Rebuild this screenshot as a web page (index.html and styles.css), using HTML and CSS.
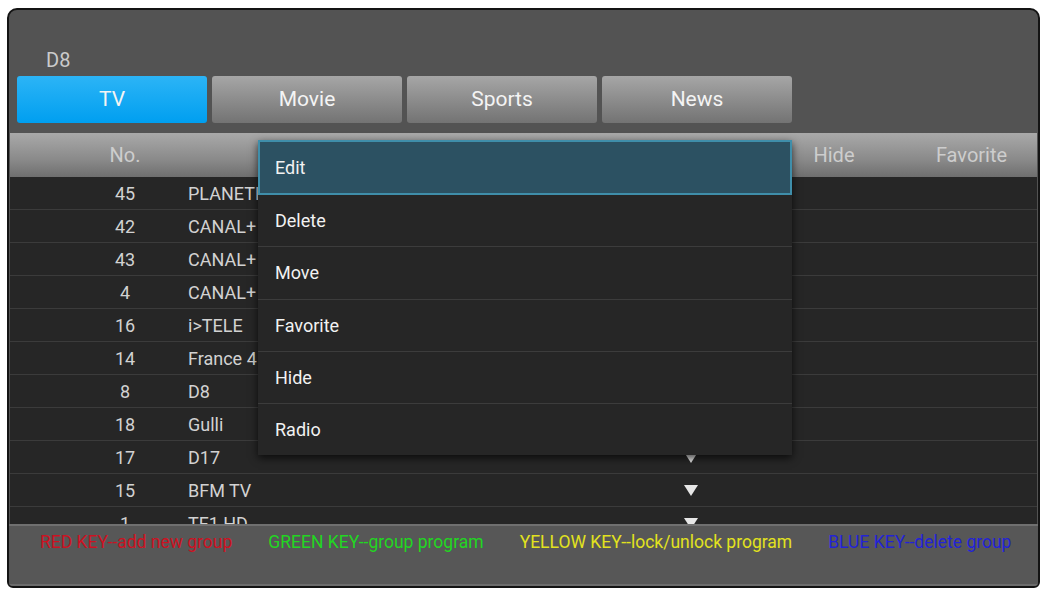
FILE: index.html
```html
<!DOCTYPE html>
<html lang="en">
<head>
    <meta charset="UTF-8">
    <title>Channel Edit</title>
    <link rel="stylesheet" href="styles.css">
</head>
<body>

<div class="panel">
    <!-- Current channel + groups -->
    <div class="top">
        <div class="current">D8</div>
        <div class="tabs">
            <div class="tab active">TV</div>
            <div class="tab">Movie</div>
            <div class="tab">Sports</div>
            <div class="tab">News</div>
        </div>
    </div>

    <!-- Channel table -->
    <div class="table">
        <div class="row head">
            <span class="no">No.</span>
            <span class="name center">Program Name</span>
            <span class="lock">Lock</span>
            <span class="hide">Hide</span>
            <span class="fav">Favorite</span>
        </div>
        <div class="list">
            <div class="row"><span class="no">45</span><span class="name">PLANETE+</span><span class="lock"><svg class="tri" viewBox="0 0 14 11"><polygon points="0,0 14,0 7,11"/></svg></span><span class="hide"></span><span class="fav"></span></div>
            <div class="row"><span class="no">42</span><span class="name">CANAL+ SPORT</span><span class="lock"><svg class="tri" viewBox="0 0 14 11"><polygon points="0,0 14,0 7,11"/></svg></span><span class="hide"></span><span class="fav"></span></div>
            <div class="row"><span class="no">43</span><span class="name">CANAL+ CINEMA</span><span class="lock"><svg class="tri" viewBox="0 0 14 11"><polygon points="0,0 14,0 7,11"/></svg></span><span class="hide"></span><span class="fav"></span></div>
            <div class="row"><span class="no">4</span><span class="name">CANAL+</span><span class="lock"><svg class="tri" viewBox="0 0 14 11"><polygon points="0,0 14,0 7,11"/></svg></span><span class="hide"></span><span class="fav"></span></div>
            <div class="row"><span class="no">16</span><span class="name">i&gt;TELE</span><span class="lock"><svg class="tri" viewBox="0 0 14 11"><polygon points="0,0 14,0 7,11"/></svg></span><span class="hide"></span><span class="fav"></span></div>
            <div class="row"><span class="no">14</span><span class="name">France 4</span><span class="lock"><svg class="tri" viewBox="0 0 14 11"><polygon points="0,0 14,0 7,11"/></svg></span><span class="hide"></span><span class="fav"></span></div>
            <div class="row"><span class="no">8</span><span class="name">D8</span><span class="lock"><svg class="tri" viewBox="0 0 14 11"><polygon points="0,0 14,0 7,11"/></svg></span><span class="hide"></span><span class="fav"></span></div>
            <div class="row"><span class="no">18</span><span class="name">Gulli</span><span class="lock"><svg class="tri" viewBox="0 0 14 11"><polygon points="0,0 14,0 7,11"/></svg></span><span class="hide"></span><span class="fav"></span></div>
            <div class="row"><span class="no">17</span><span class="name">D17</span><span class="lock"><svg class="tri" viewBox="0 0 14 11"><polygon points="0,0 14,0 7,11"/></svg></span><span class="hide"></span><span class="fav"></span></div>
            <div class="row"><span class="no">15</span><span class="name">BFM TV</span><span class="lock"><svg class="tri" viewBox="0 0 14 11"><polygon points="0,0 14,0 7,11"/></svg></span><span class="hide"></span><span class="fav"></span></div>
            <div class="row"><span class="no">1</span><span class="name">TF1 HD</span><span class="lock"><svg class="tri" viewBox="0 0 14 11"><polygon points="0,0 14,0 7,11"/></svg></span><span class="hide"></span><span class="fav"></span></div>
        </div>
    </div>

    <!-- Colour key hints -->
    <div class="keys">
        <span class="key red">RED KEY--add new group</span>
        <span class="key green">GREEN KEY--group program</span>
        <span class="key yellow">YELLOW KEY--lock/unlock program</span>
        <span class="key blue">BLUE KEY--delete group</span>
    </div>

    <!-- Popup menu -->
    <div class="menu">
        <div class="item selected">Edit</div>
        <div class="item">Delete</div>
        <div class="item">Move</div>
        <div class="item">Favorite</div>
        <div class="item">Hide</div>
        <div class="item">Radio</div>
    </div>
</div>

</body>
</html>
```

FILE: styles.css
```css
* {
    margin: 0;
    padding: 0;
    box-sizing: border-box;
}
body {
    background-color: #fff;
    font-family: Roboto, "Liberation Sans", sans-serif;
}
.panel {
    position: relative;
    width: 1033px;
    height: 580px;
    margin: 8px 0 0 7px;
    background-color: #535353;
    border: 2px solid #141414;
    border-radius: 10px 10px 6px 6px;
    overflow: hidden;
    display: flex;
    flex-direction: column;
}
.top {
    padding: 38px 8px 0 8px;
}
.current {
    padding-left: 29px;
    height: 28px;
    line-height: 24px;
    font-size: 20px;
    color: #cbcbcb;
}
.tabs {
    display: flex;
    gap: 5px;
}
.tab {
    width: 190px;
    height: 47px;
    line-height: 47px;
    text-align: center;
    font-size: 21px;
    color: #f4f4f4;
    border-radius: 3px;
    background: linear-gradient(#a6a6a6, #737373);
}
.tab.active {
    background: linear-gradient(#2cb4f6, #009ff0);
}
.table {
    margin: 10px 1px 0 1px;
}
.row {
    display: grid;
    grid-template-columns: 126px 432px 142px 144px 131px;
    padding-left: 52px;
    height: 33px;
    align-items: center;
    font-size: 18px;
    color: #d2d2d2;
    border-bottom: 1px solid #3b3b3b;
    background-color: #262626;
}
.row.head {
    height: 44px;
    font-size: 20px;
    color: #cdcdcd;
    border-bottom: none;
    background: linear-gradient(#a9a9a9, #8a8a8a 60%, #6f6f6f);
}
.row .no, .row .lock, .row .hide, .row .fav, .row .center {
    text-align: center;
}
.row .lock {
    display: flex;
    justify-content: center;
}
.tri {
    width: 14px;
    height: 11px;
    fill: #e6e6e6;
}
.list {
    height: 347px;
    overflow: hidden;
}
.keys {
    flex: 1;
    display: flex;
    gap: 36px;
    padding: 4px 0 0 31px;
    line-height: 24px;
    border-top: 2px solid #707070;
    border-bottom: 2px solid #6c6c6c;
    background-color: #575757;
    font-size: 17.5px;
}
.red { color: #cc1222; }
.green { color: #22d622; }
.yellow { color: #e2e21e; }
.blue { color: #2323d6; }
.menu {
    position: absolute;
    left: 249px;
    top: 130px;
    width: 534px;
    height: 315px;
    background-color: #262626;
    box-shadow: 0 3px 8px rgba(0, 0, 0, 0.7);
    display: flex;
    flex-direction: column;
}
.item {
    flex: 1;
    display: flex;
    align-items: center;
    padding-left: 17px;
    font-size: 18px;
    color: #f2f2f2;
    border-top: 1px solid #3c3c3c;
}
.item.selected {
    border: 2px solid #3f8eaa;
    background-color: #2c5162;
    padding-left: 15px;
}
.item.selected + .item {
    border-top: none;
}
```
